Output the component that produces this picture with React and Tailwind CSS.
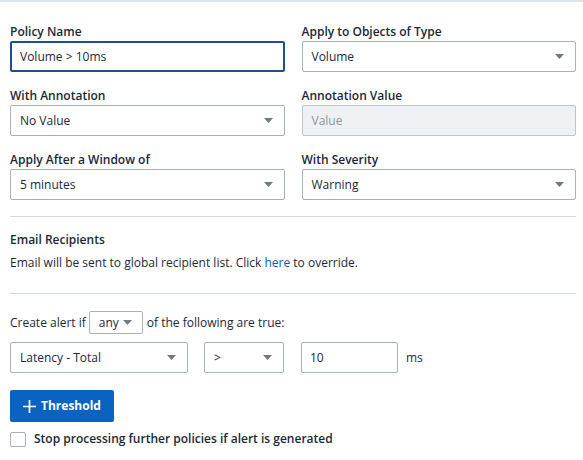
const font = { fontFamily: '"Open Sans", "Noto Sans", sans-serif' };

function Caret({ className = "" }) {
  return (
    <svg width="9" height="5" viewBox="0 0 9 5" className={className}>
      <path d="M0 0h9L4.5 5z" fill="#6f7985" />
    </svg>
  );
}

function Field({ label, children }) {
  return (
    <div className="flex flex-col">
      <label className="text-[12px] font-semibold text-[#1c2838] leading-[14px] mb-[2px]">{label}</label>
      {children}
    </div>
  );
}

function Select({ value, className = "w-full" }) {
  return (
    <div
      className={`h-[31px] flex items-center justify-between pl-[9px] pr-[11px] border border-[#a7b0bd] rounded-[2px] bg-white text-[12px] text-[#1c2838] ${className}`}
    >
      <span>{value}</span>
      <Caret />
    </div>
  );
}

export default function App() {
  return (
    <div style={font} className="w-[583px] h-[460px] bg-white border-t-2 border-[#dde2ea] pl-[10px] pr-[7px] pt-[23px]">
      <div className="grid grid-cols-2 gap-x-[17px] gap-y-[17px]">
        <Field label="Policy Name">
          <div className="h-[31px] flex items-center px-[8px] border-2 border-[#1d4f91] rounded-[2px] text-[12px] text-[#1c2838]">
            Volume &gt; 10ms
          </div>
        </Field>
        <Field label="Apply to Objects of Type">
          <Select value="Volume" />
        </Field>
        <Field label="With Annotation">
          <Select value="No Value" />
        </Field>
        <Field label="Annotation Value">
          <div className="h-[31px] flex items-center px-[9px] border border-[#bcc4cf] rounded-[2px] bg-[#eef1f4] text-[12px] text-[#8a94a1]">
            Value
          </div>
        </Field>
        <Field label="Apply After a Window of">
          <Select value="5 minutes" />
        </Field>
        <Field label="With Severity">
          <Select value="Warning" />
        </Field>
      </div>

      <div className="h-px bg-[#d3d9e1] mt-[16px]" />

      <div className="mt-[15px] text-[12px] text-[#1c2838]">
        <div className="font-semibold leading-[16px]">Email Recipients</div>
        <div className="leading-[16px] mt-[7px]">
          Email will be sent to global recipient list. Click <span className="text-[#0b5cad]">here</span> to override.
        </div>
      </div>

      <div className="h-px bg-[#d3d9e1] mt-[22px]" />

      <div className="mt-[17px] flex items-center text-[12px] text-[#1c2838]">
        <span>Create alert if</span>
        <div className="ml-[3px] mr-[4px] w-[54px] h-[23px] flex items-center justify-between pl-[9px] pr-[10px] border border-[#a7b0bd] rounded-[2px]">
          <span>any</span>
          <Caret />
        </div>
        <span>of the following are true:</span>
      </div>

      <div className="mt-[8px] flex items-center">
        <Select value="Latency - Total" className="w-[178px]" />
        <Select value="&gt;" className="w-[80px] ml-[16px]" />
        <div className="ml-[17px] w-[97px] h-[31px] flex items-center px-[8px] border border-[#a7b0bd] rounded-[2px] text-[12px] text-[#1c2838]">
          10
        </div>
        <span className="ml-[8px] text-[12px] text-[#1c2838]">ms</span>
      </div>

      <button className="mt-[17px] h-[32px] w-[104px] flex items-center justify-center gap-[5px] bg-[#0b63c1] rounded-[2px] text-white text-[12px] font-bold">
        <svg width="13" height="13" viewBox="0 0 13 13">
          <path d="M6.5 0v13M0 6.5h13" stroke="white" strokeWidth="1.7" />
        </svg>
        Threshold
      </button>

      <label className="mt-[8px] flex items-center gap-[8px] text-[12px] font-semibold text-[#1c2838]">
        <span className="w-[16px] h-[15px] border border-[#a7b0bd] rounded-[2px] bg-white" />
        Stop processing further policies if alert is generated
      </label>
    </div>
  );
}
